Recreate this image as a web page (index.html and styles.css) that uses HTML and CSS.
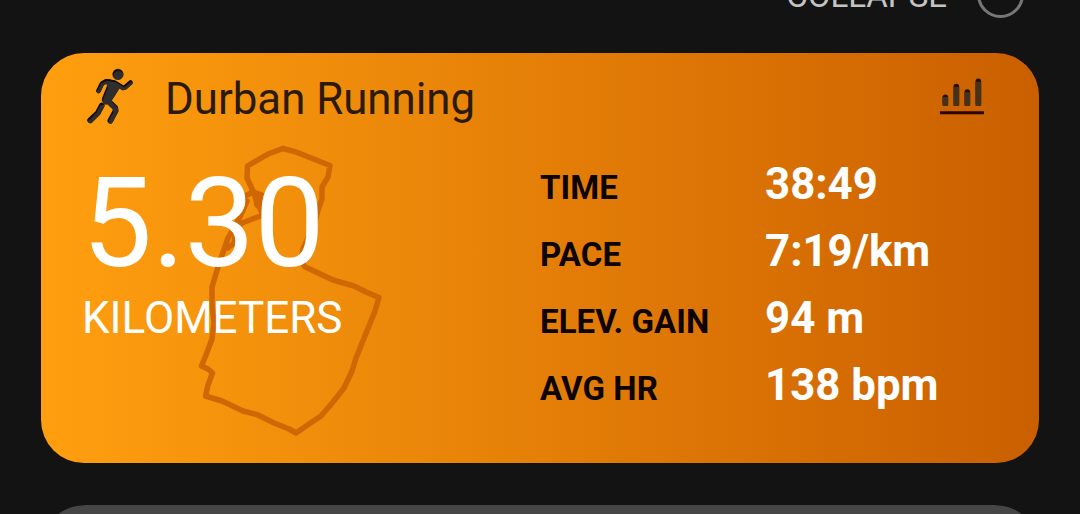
FILE: index.html
```html
<!DOCTYPE html>
<html lang="en">
<head>
  <meta charset="UTF-8" />
  <title>Durban Running</title>
  <meta name="viewport" content="width=device-width, initial-scale=1.0"/>
  <link rel="stylesheet" href="styles.css">
</head>
<body>
  <div class="top-bar">
    <span class="collapse-label">COLLAPSE</span>
    <span class="collapse-toggle"></span>
  </div>

  <div class="card">
    <!-- GPS route -->
    <svg class="route" viewBox="195 140 190 300">
      <path d="M283 148.500 L296 152 L330 165.500 L328 177 L322 187 L322 199 L318 210 L314 225 L303 249 L301 261 L305 267 L314 271 L333 280 L354 286 L366 292 L379 297.500 L375 311 L371 321 L356 358 L352 371 L344 388 L333 402 L321 416 L309 424 L296 433 L289 429 L274 423 L258 415 L243 411 L222 401 L205.500 396 L208 385 L212.500 373 L208 369 L201.500 366 L206 355 L212 339 L214 322 L212 306 L212 287 L218 267 L228 238 L240 217 L247 201"/>
      <path d="M283 148.500 L268 154 L247.500 166 L247 178 L253 191 L258 204 L263 215 L242 223 L236 230 L234 243 L228 248"/>
      <path d="M245 196 L253 192 L262 195"/>
      <path class="route-knot" d="M258 197 L259 204"/>
    </svg>

    <div class="card-header">
      <svg class="icon-run" viewBox="45 35 150 175">
        <defs>
          <g id="runner">
            <circle cx="144" cy="57" r="16"/>
            <path d="M104 74 Q112 69 129 76 L154 89 L134 122 L126 134 L108 148 Q92 140 97 128 L112 91 Z"/>
            <path class="limb" d="M85 107 L96 85 L108 78 L133 82 L160 98 L166 96 L182 82"/>
            <path class="limb leg" d="M108 132 L136 158 L137 167 L121 197"/>
            <path class="limb leg" d="M95 151 L83 174 L60 196"/>
          </g>
          <mask id="runnerMask"><use href="#runner" fill="#fff" stroke="#fff"/></mask>
        </defs>
        <use href="#runner" fill="#100a02" stroke="#100a02"/>
        <g mask="url(#runnerMask)">
          <use href="#runner" fill="#2f2e2c" stroke="#2f2e2c" transform="translate(2 6)"/>
        </g>
      </svg>
      <h2 class="card-title">Durban Running</h2>
      <svg class="icon-chart" viewBox="60 50 132 114">
        <path class="bar-cap" d="M76 128 V111 M109 128 V79 M142 128 V95 M175 128 V63"/>
        <path class="bar" d="M76 137 V110 M109 137 V80 M142 137 V96 M175 137 V64"/>
        <path class="axis" d="M60 157.500 H192"/>
      </svg>
    </div>

    <div class="card-body">
      <div class="distance">
        <div class="distance-value">5.30</div>
        <div class="distance-unit">KILOMETERS</div>
      </div>
      <div class="stats">
        <span class="stat-label">TIME</span>
        <span class="stat-value">38:49</span>
        <span class="stat-label">PACE</span>
        <span class="stat-value">7:19/km</span>
        <span class="stat-label">ELEV. GAIN</span>
        <span class="stat-value">94 m</span>
        <span class="stat-label">AVG HR</span>
        <span class="stat-value">138 bpm</span>
      </div>
    </div>
  </div>

  <div class="card-next"></div>
</body>
</html>
```
FILE: styles.css
```css
* {
  box-sizing: border-box;
}
body {
  margin: 0;
  height: 514px;
  overflow: hidden;
  background: #131313;
  font-family: Roboto, sans-serif;
  display: flex;
  flex-direction: column;
}
.top-bar {
  flex: none;
  height: 116px;
  margin-top: -63px;
  padding-right: 56px;
  display: flex;
  justify-content: flex-end;
  align-items: center;
  gap: 30px;
}
.collapse-label {
  font-size: 33px;
  color: #c4c4c4;
}
.collapse-toggle {
  width: 47px;
  height: 47px;
  margin-bottom: 2px;
  border: 3px solid #777;
  border-radius: 50%;
}
.card {
  position: relative;
  flex: none;
  height: 410px;
  margin: 0 41px;
  padding-top: 14px;
  border-radius: 43px;
  background: linear-gradient(to right, #ff9f0f, #ca5f00);
}
/* top of the following card */
.card-next {
  flex: 1;
  margin: 42px 41px 0;
  background: radial-gradient(circle 43px at 43px 43px, #464646 98%, transparent) left top / 43px 100% no-repeat,
    radial-gradient(circle 43px at 0 43px, #464646 98%, transparent) right top / 43px 100% no-repeat,
    linear-gradient(#464646, #464646) center / calc(100% - 86px) 100% no-repeat;
}

/* route sits behind the distance text */
.route {
  position: absolute;
  left: 154px;
  top: 87px;
  width: 190px;
  height: 300px;
  fill: none;
  stroke: #cf6703;
  stroke-width: 5.5;
  stroke-linejoin: round;
  stroke-linecap: round;
}
.route-knot {
  stroke-width: 10;
}

.card-header {
  position: relative;
  height: 64px;
  padding: 0 55px 0 44px;
  display: flex;
  align-items: center;
}
.icon-run {
  width: 50px;
  height: 58px;
  margin-bottom: 6px;
}
.limb {
  fill: none;
  stroke-width: 14;
  stroke-linecap: round;
  stroke-linejoin: round;
}
.leg {
  stroke-width: 17;
}
.card-title {
  flex: 1;
  margin: 0 0 0 30px;
  font-size: 43.8px;
  font-weight: 400;
  color: #2b1a08;
}
.icon-chart {
  width: 44px;
  height: 38px;
  margin-bottom: 7px;
  fill: none;
  stroke-width: 17;
}
.bar-cap {
  stroke: #2a0d02;
  stroke-linecap: round;
}
.bar {
  stroke: #45321c;
}
.axis {
  stroke: #2a0500;
  stroke-width: 9;
}

.card-body {
  position: relative;
  display: flex;
}
.distance {
  width: 499px;
  padding: 32px 0 0 41px;
  color: #fff;
}
.distance-value {
  font-size: 125px;
  line-height: 121px;
  letter-spacing: -0.3px;
}
.distance-unit {
  font-size: 44px;
  line-height: 68px;
}
.stats {
  padding-top: 20px;
  display: grid;
  grid-template-columns: 225px auto;
  grid-auto-rows: 67px;
  align-items: baseline;
}
.stat-label {
  font-size: 33px;
  font-weight: 700;
  letter-spacing: 0.1px;
  color: #0d0400;
}
.stat-value {
  font-size: 43.8px;
  line-height: 67px;
  font-weight: 700;
  color: #fff;
}
```
